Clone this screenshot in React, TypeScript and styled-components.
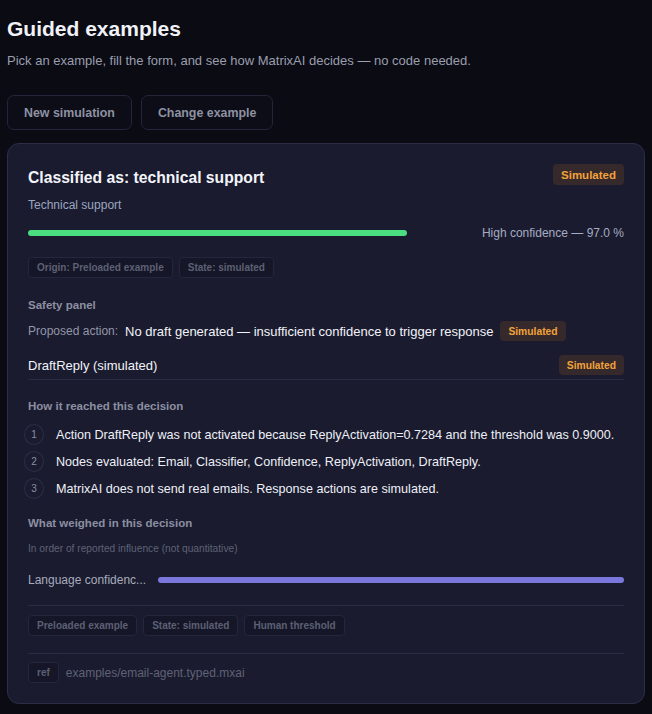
import React from 'react';
import styled, { createGlobalStyle } from 'styled-components';

const GlobalStyle = createGlobalStyle`
  html, body {
    margin: 0;
    padding: 0;
    background: #0a0b13;
  }
  body {
    font-family: 'Liberation Sans', Arial, sans-serif;
    color: #e8e9f2;
  }
  * { box-sizing: border-box; }
`;

const Page = styled.div`
  padding: 14px 7px 10px 7px;
  width: 652px;
`;

const Title = styled.h1`
  margin: 0;
  font-size: 21px;
  font-weight: 700;
  line-height: 30px;
  color: #f1f2f8;
`;

const Subtitle = styled.p`
  margin: 8px 0 0 0;
  font-size: 13px;
  line-height: 18px;
  color: #9a9eae;
`;

const Toolbar = styled.div`
  display: flex;
  gap: 9px;
  margin-top: 25px;
`;

const GhostButton = styled.button`
  height: 35px;
  padding: 0 16px;
  background: #0c0d16;
  border: 1px solid #23253a;
  border-radius: 7px;
  color: #8e91a2;
  font-family: inherit;
  font-size: 12.4px;
  font-weight: 700;
`;

const Card = styled.section`
  margin-top: 13px;
  background: #1a1b2e;
  border: 1px solid #2c2e48;
  border-radius: 12px;
  padding: 20px;
`;

const HeaderRow = styled.div`
  display: flex;
  justify-content: space-between;
  align-items: flex-start;
`;

const CardTitle = styled.h2`
  margin: 2px 0 0 0;
  font-size: 15.7px;
  font-weight: 700;
  line-height: 24px;
  color: #f3f4fa;
`;

const Badge = styled.span<{ $small?: boolean }>`
  display: inline-flex;
  align-items: center;
  height: ${(p) => (p.$small ? '20px' : '21px')};
  padding: 0 8px;
  border-radius: 4px;
  background: #35292c;
  color: #f2a23a;
  font-size: ${(p) => (p.$small ? '10.3px' : '11.5px')};
  font-weight: 700;
  white-space: nowrap;
`;

const Category = styled.div`
  margin-top: 8px;
  font-size: 12px;
  color: #9aa6c0;
`;

const ConfidenceRow = styled.div`
  display: flex;
  align-items: center;
  justify-content: space-between;
  margin-top: 14px;
`;

const Track = styled.div`
  width: 379px;
  height: 6px;
  border-radius: 3px;
`;

const Fill = styled.div<{ $color: string }>`
  height: 100%;
  border-radius: 3px;
  background: ${(p) => p.$color};
`;

const ConfidenceText = styled.span`
  font-size: 12px;
  color: #a6acc2;
`;

const ChipRow = styled.div<{ $top?: number }>`
  display: flex;
  gap: 6px;
  margin-top: ${(p) => p.$top ?? 0}px;
`;

const Chip = styled.span`
  display: inline-flex;
  align-items: center;
  height: 21px;
  padding: 0 8px;
  background: #151627;
  border: 1px solid #24263b;
  border-radius: 4px;
  color: #5d6074;
  font-size: 10px;
  font-weight: 700;
  white-space: nowrap;
`;

const SectionLabel = styled.div<{ $top: number }>`
  margin-top: ${(p) => p.$top}px;
  font-size: 11.5px;
  font-weight: 700;
  color: #8c8fa2;
`;

const ActionRow = styled.div`
  display: flex;
  align-items: center;
  gap: 7px;
  margin-top: 10px;
  font-size: 13px;
`;

const Muted = styled.span`
  font-size: 12px;
  color: #9296a8;
`;

const Strong = styled.span`
  color: #f2f3f9;
`;

const ReplyRow = styled.div`
  display: flex;
  align-items: center;
  justify-content: space-between;
  margin-top: 14px;
  padding-bottom: 4px;
  border-bottom: 1px solid #2a2c45;
  font-size: 13px;
  color: #f2f3f9;
`;

const Steps = styled.ol`
  list-style: none;
  margin: 12px 0 0 -4px;
  padding: 0;
  display: flex;
  flex-direction: column;
  gap: 6px;
`;

const Step = styled.li`
  display: flex;
  align-items: center;
  gap: 12px;
  font-size: 12.6px;
  color: #eef0f8;
  white-space: nowrap;
`;

const StepNum = styled.span`
  flex: none;
  width: 20px;
  height: 21px;
  border-radius: 50%;
  border: 1px solid #2c2e46;
  display: inline-flex;
  align-items: center;
  justify-content: center;
  font-size: 10px;
  color: #8a8ea2;
`;

const Hint = styled.div`
  margin-top: 14px;
  font-size: 10.2px;
  color: #5f6276;
`;

const WeightRow = styled.div`
  display: flex;
  align-items: center;
  gap: 14px;
  margin-top: 19px;
  padding-bottom: 18px;
  border-bottom: 1px solid #2a2c45;
`;

const WeightLabel = styled.span`
  flex: none;
  width: 116px;
  font-size: 12px;
  color: #a7abbd;
  white-space: nowrap;
`;

const WeightTrack = styled.div`
  flex: 1;
  height: 6px;
`;

const FooterChips = styled.div`
  padding: 9px 0 17px 0;
  border-bottom: 1px solid #2a2c45;
`;

const RefRow = styled.div`
  display: flex;
  align-items: center;
  gap: 7px;
  margin-top: 8px;
`;

const RefPath = styled.span`
  font-size: 12px;
  color: #5f6276;
`;

const steps = [
  'Action DraftReply was not activated because ReplyActivation=0.7284 and the threshold was 0.9000.',
  'Nodes evaluated: Email, Classifier, Confidence, ReplyActivation, DraftReply.',
  'MatrixAI does not send real emails. Response actions are simulated.',
];

export default function App() {
  return (
    <>
      <GlobalStyle />
      <Page>
        <Title>Guided examples</Title>
        <Subtitle>Pick an example, fill the form, and see how MatrixAI decides — no code needed.</Subtitle>
        <Toolbar>
          <GhostButton>New simulation</GhostButton>
          <GhostButton>Change example</GhostButton>
        </Toolbar>

        <Card>
          <HeaderRow>
            <CardTitle>Classified as: technical support</CardTitle>
            <Badge>Simulated</Badge>
          </HeaderRow>
          <Category>Technical support</Category>
          <ConfidenceRow>
            <Track>
              <Fill $color="#4ade80" style={{ width: '100%' }} />
            </Track>
            <ConfidenceText>High confidence — 97.0 %</ConfidenceText>
          </ConfidenceRow>
          <ChipRow $top={17}>
            <Chip>Origin: Preloaded example</Chip>
            <Chip>State: simulated</Chip>
          </ChipRow>

          <SectionLabel $top={21}>Safety panel</SectionLabel>
          <ActionRow>
            <Muted>Proposed action:</Muted>
            <Strong>No draft generated — insufficient confidence to trigger response</Strong>
            <Badge $small>Simulated</Badge>
          </ActionRow>
          <ReplyRow>
            <span>DraftReply (simulated)</span>
            <Badge $small>Simulated</Badge>
          </ReplyRow>

          <SectionLabel $top={20}>How it reached this decision</SectionLabel>
          <Steps>
            {steps.map((s, i) => (
              <Step key={i}>
                <StepNum>{i + 1}</StepNum>
                {s}
              </Step>
            ))}
          </Steps>

          <SectionLabel $top={18}>What weighed in this decision</SectionLabel>
          <Hint>In order of reported influence (not quantitative)</Hint>
          <WeightRow>
            <WeightLabel>Language confidenc...</WeightLabel>
            <WeightTrack>
              <Fill $color="#7b77dc" style={{ width: '100%' }} />
            </WeightTrack>
          </WeightRow>

          <FooterChips>
            <ChipRow>
              <Chip>Preloaded example</Chip>
              <Chip>State: simulated</Chip>
              <Chip>Human threshold</Chip>
            </ChipRow>
          </FooterChips>

          <RefRow>
            <Chip>ref</Chip>
            <RefPath>examples/email-agent.typed.mxai</RefPath>
          </RefRow>
        </Card>
      </Page>
    </>
  );
}
